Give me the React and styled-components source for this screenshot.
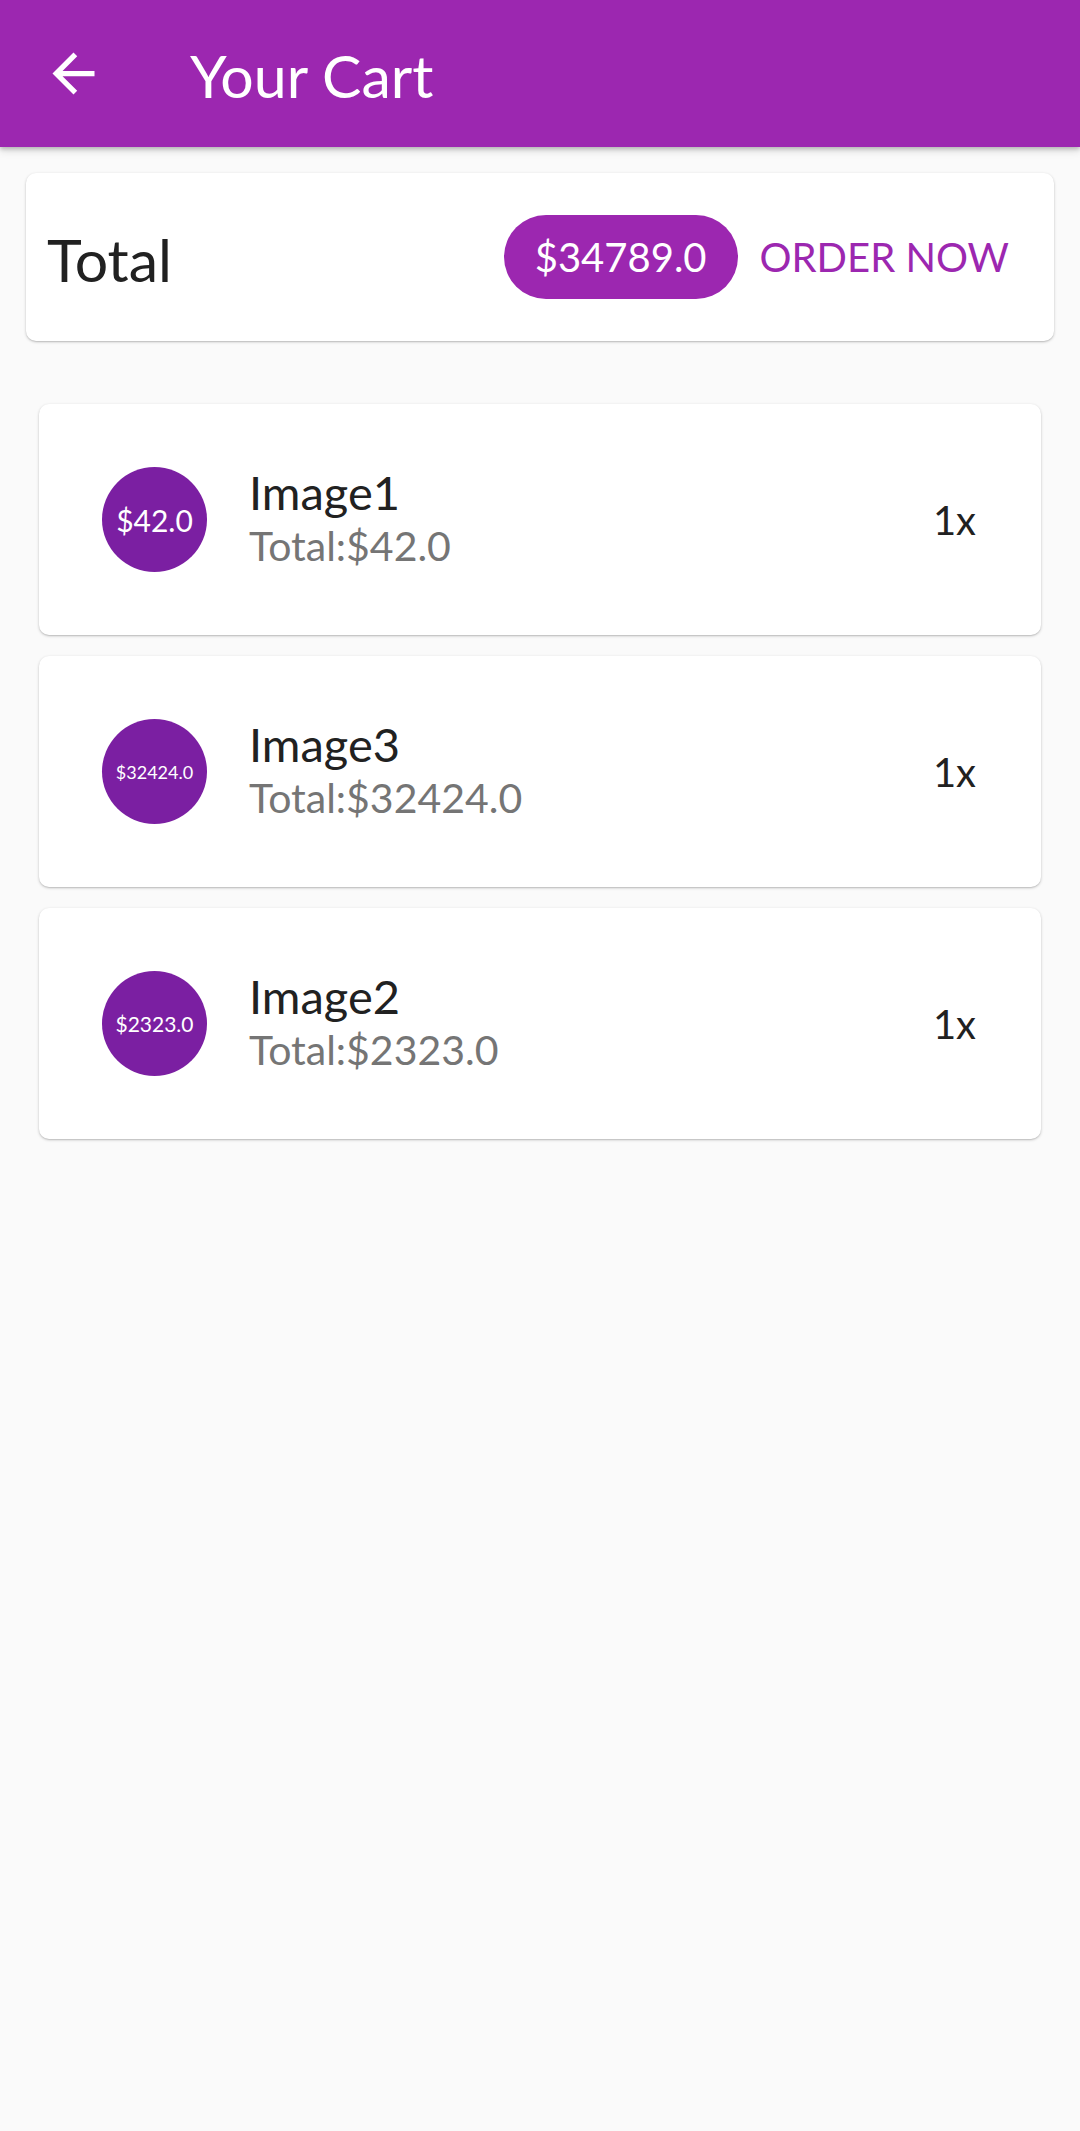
import styled, { createGlobalStyle } from "styled-components";

const items = [
  { name: "Image1", price: "$42.0", total: "$42.0", qty: 1, badgeSize: 30 },
  { name: "Image3", price: "$32424.0", total: "$32424.0", qty: 1, badgeSize: 18 },
  { name: "Image2", price: "$2323.0", total: "$2323.0", qty: 1, badgeSize: 21 },
];

const BackArrow = () => (
  <svg width="63" height="63" viewBox="0 0 24 24" fill="#fff">
    <path d="M20 11H7.83l5.59-5.59L12 4l-8 8 8 8 1.41-1.41L7.83 13H20v-2z" />
  </svg>
);

const Cart = () => {
  return (
    <Page>
      <GlobalStyle />
      <AppBar>
        <IconButton>
          <BackArrow />
        </IconButton>
        <Title>Your Cart</Title>
      </AppBar>

      <Body>
        <TotalCard>
          <TotalLabel>Total</TotalLabel>
          <Spacer />
          <Chip>$34789.0</Chip>
          <OrderButton>ORDER NOW</OrderButton>
        </TotalCard>

        <List>
          {items.map((item) => (
            <ItemCard key={item.name}>
              <Avatar>
                <AvatarText size={item.badgeSize}>{item.price}</AvatarText>
              </Avatar>
              <ItemInfo>
                <ItemName>{item.name}</ItemName>
                <ItemTotal>Total:{item.total}</ItemTotal>
              </ItemInfo>
              <Qty>{item.qty}x</Qty>
            </ItemCard>
          ))}
        </List>
      </Body>
    </Page>
  );
};

const GlobalStyle = createGlobalStyle`
  html, body, #root {
    margin: 0;
    padding: 0;
    min-height: 100%;
    height: 100%;
  }
  body {
    background: #fafafa;
    font-family: Lato, "Noto Sans", sans-serif;
  }
`;

const Page = styled.div`
  min-height: 100vh;
  background: #fafafa;
`;

const AppBar = styled.header`
  display: flex;
  align-items: center;
  height: 147px;
  background: #9c27b0;
  box-shadow: 0 2px 4px rgba(0, 0, 0, 0.2), 0 4px 8px rgba(0, 0, 0, 0.12);
  position: relative;
  z-index: 1;
`;

const IconButton = styled.div`
  display: flex;
  align-items: center;
  justify-content: center;
  width: 63px;
  height: 63px;
  margin-left: 42px;
  margin-right: 85px;
`;

const Title = styled.h1`
  margin: 0;
  font-family: Lato, sans-serif;
  font-weight: 400;
  font-size: 59px;
  color: #fff;
  line-height: 1;
  padding-top: 4px;
`;

const Body = styled.main`
  padding: 26px 26px 0;
`;

const TotalCard = styled.section`
  display: flex;
  align-items: center;
  height: 168px;
  box-sizing: border-box;
  padding: 0 23px 0 21px;
  background: #fff;
  border-radius: 10px;
  box-shadow: 0 1px 3px rgba(0, 0, 0, 0.22), 0 1px 1px rgba(0, 0, 0, 0.08);
`;

const TotalLabel = styled.span`
  font-size: 59px;
  color: #212121;
  line-height: 1;
  padding-top: 4px;
`;

const Spacer = styled.div`
  flex: 1;
`;

const Chip = styled.span`
  display: flex;
  align-items: center;
  justify-content: center;
  height: 84px;
  padding: 0 31px;
  border-radius: 42px;
  background: #9c27b0;
  color: #fff;
  font-size: 40px;
  line-height: 1;
`;

const OrderButton = styled.button`
  border: none;
  background: none;
  padding: 0 22px;
  height: 84px;
  font-family: Lato, sans-serif;
  font-size: 40px;
  color: #9c27b0;
  letter-spacing: 0;
  cursor: pointer;
`;

const List = styled.div`
  display: flex;
  flex-direction: column;
  gap: 21px;
  margin-top: 63px;
  padding: 0 13px;
`;

const ItemCard = styled.div`
  display: flex;
  align-items: center;
  height: 231px;
  box-sizing: border-box;
  padding: 0 65px 0 63px;
  background: #fff;
  border-radius: 10px;
  box-shadow: 0 1px 3px rgba(0, 0, 0, 0.22), 0 1px 1px rgba(0, 0, 0, 0.08);
`;

const Avatar = styled.div`
  display: flex;
  align-items: center;
  justify-content: center;
  flex: none;
  width: 105px;
  height: 105px;
  border-radius: 50%;
  background: #7b1fa2;
`;

const AvatarText = styled.span`
  color: #fff;
  font-size: ${(p) => p.size}px;
  line-height: 1;
  white-space: nowrap;
`;

const ItemInfo = styled.div`
  display: flex;
  flex-direction: column;
  flex: 1;
  margin-left: 42px;
`;

const ItemName = styled.span`
  font-size: 47px;
  line-height: 48px;
  color: #212121;
`;

const ItemTotal = styled.span`
  margin-top: 5px;
  font-size: 41px;
  line-height: 50px;
  color: #757575;
`;

const Qty = styled.span`
  font-size: 40px;
  color: #212121;
`;

export default Cart;
